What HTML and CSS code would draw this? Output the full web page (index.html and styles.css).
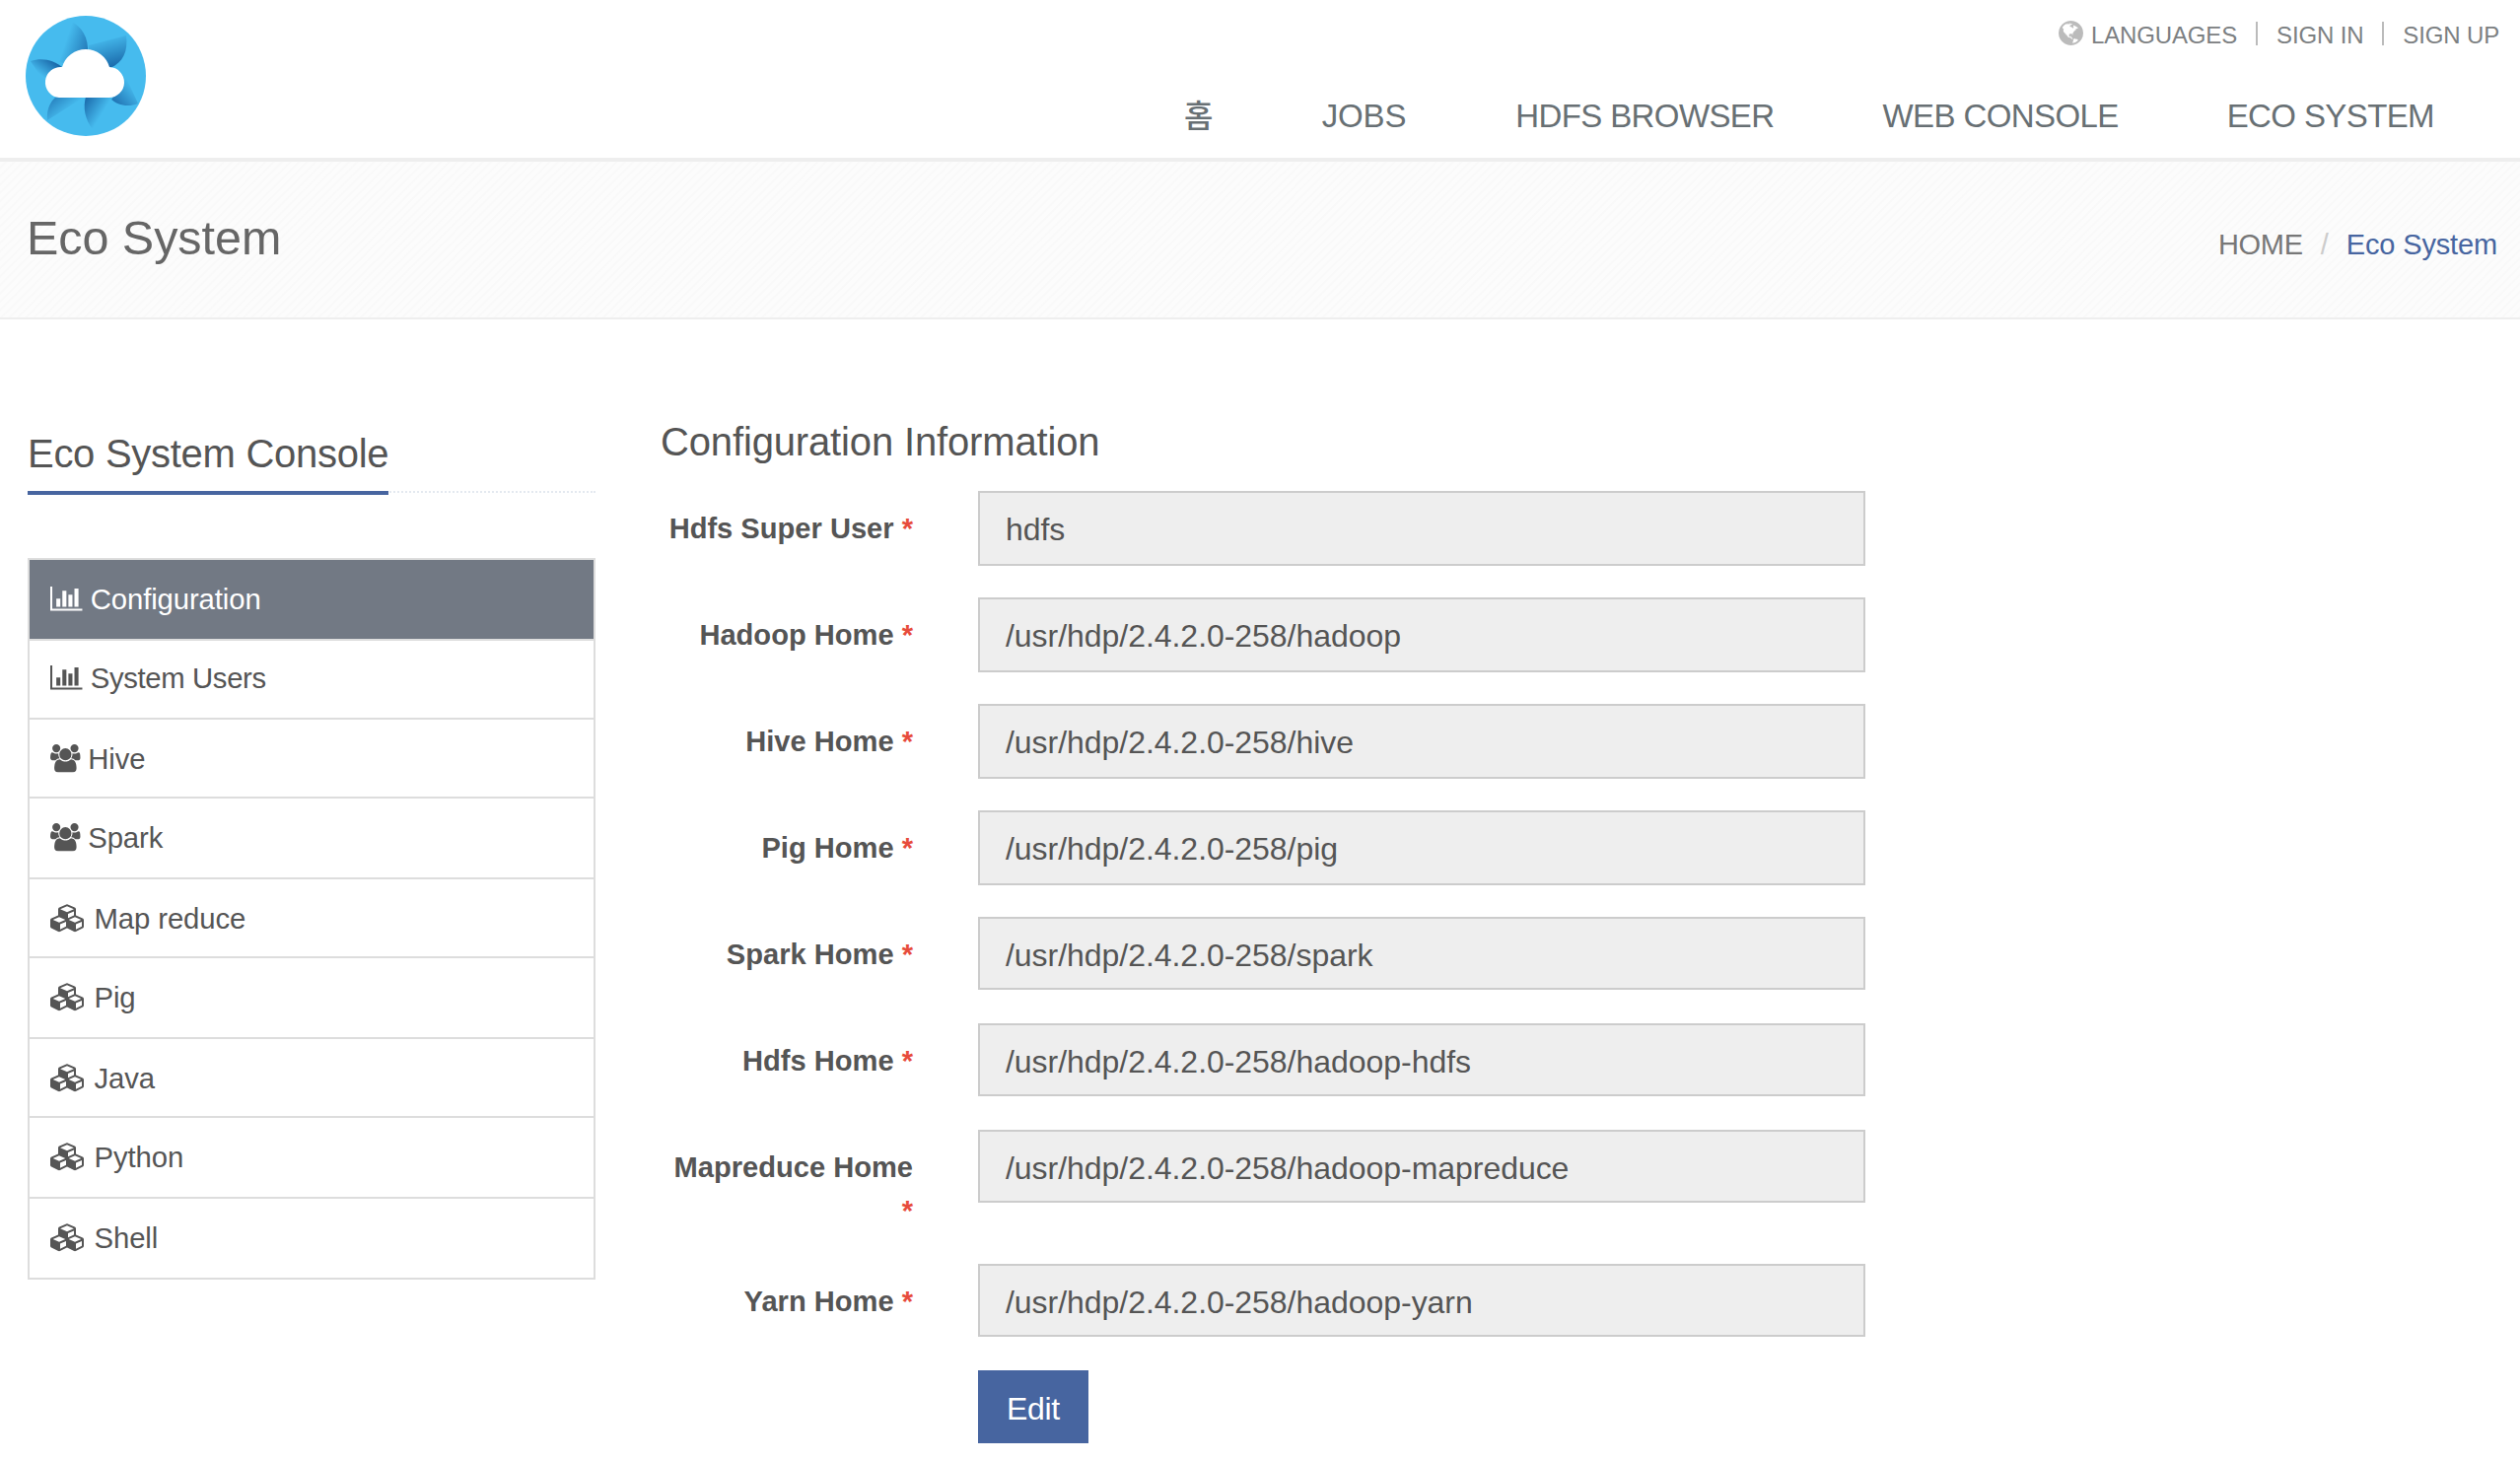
FILE: index.html
```html
<!DOCTYPE html>
<html lang="ko">
<head>
<meta charset="utf-8">
<title>Eco System</title>
<link rel="stylesheet" href="styles.css">
</head>
<body>
<svg class="sprite" aria-hidden="true">
  <symbol id="bar-chart" viewBox="0 0 2048 1792"><path d="M640 896v512h-256v-512h256zm384-512v1024h-256v-1024h256zm1024 1152v128h-2048v-1536h128v1408h1920zm-640-896v768h-256v-768h256zm384-384v1152h-256v-1152h256z"/></symbol>
  <symbol id="group" viewBox="0 0 1920 1792"><path d="M593 896q-162 5-265 128h-134q-82 0-138-40.500t-56-118.500q0-353 124-353 6 0 43.500 21t97.500 42.500 119 21.500q67 0 133-23-5 37-5 66 0 139 81 256zm1071 637q0 120-73 189.500t-194 69.500h-874q-121 0-194-69.500t-73-189.500q0-53 3.500-103.500t14-109 26.500-108.500 43-97.500 62-81 85.500-53.500 111.500-20q10 0 43 21.500t73 48 107 48 135 21.500 135-21.500 107-48 73-48 43-21.500q61 0 111.500 20t85.500 53.500 62 81 43 97.500 26.500 108.500 14 109 3.500 103.500zm-1024-1277q0 106-75 181t-181 75-181-75-75-181 75-181 181-75 181 75 75 181zm704 384q0 159-112.500 271.500t-271.500 112.500-271.500-112.500-112.500-271.500 112.500-271.500 271.500-112.500 271.500 112.500 112.500 271.500zm576 225q0 78-56 118.500t-138 40.500h-134q-103-123-265-128 81-117 81-256 0-29-5-66 66 23 133 23 59 0 119-21.500t97.500-42.500 43.500-21q124 0 124 353zm-128-609q0 106-75 181t-181 75-181-75-75-181 75-181 181-75 181 75 75 181z"/></symbol>
  <symbol id="cubes" viewBox="0 0 2304 1792"><path d="M640 1632l384-192v-314l-384 164v342zm-64-454l404-173-404-173-404 173zm1088 454l384-192v-314l-384 164v342zm-64-454l404-173-404-173-404 173zm-448-293l384-165v-266l-384 164v267zm-64-379l441-189-441-189-441 189zm1088 518v416q0 36-19 67t-52 47l-448 224q-25 14-57 14t-57-14l-448-224q-4-2-7-4-2 2-7 4l-448 224q-25 14-57 14t-57-14l-448-224q-33-16-52-47t-19-67v-416q0-38 21.500-70t56.500-48l434-186v-400q0-38 21.500-70t56.500-48l448-192q23-10 50-10t50 10l448 192q35 16 56.500 48t21.500 70v400l434 186q36 16 57 48t21 70z"/></symbol>
  <symbol id="globe" viewBox="0 128 1536 1536"><path d="M768 128q209 0 385.500 103t279.500 279.500 103 385.500-103 385.500-279.500 279.500-385.500 103-385.500-103-279.500-279.500-103-385.500 103-385.500 279.500-279.500 385.500-103zm274 521q-2 1-9.500 9.500t-13.500 9.500q2 0 4.500-5t5-11 3.500-7q6-7 22-15 14-6 52-12 34-8 51 11-2-2 9.500-13t14.500-12q3-2 15-4.500t15-7.500l2-22q-12 1-17.500-7t-6.500-21q0 2-6 8 0-7-4.500-8t-11.500 1-9 1q-10-3-15-7.500t-8-16.500-4-15q-2-5-9.500-11t-9.500-10q-1-2-2.500-5.500t-3-6.500-4-5.500-5.500-2.500-7 5-7.500 10-4.500 5q-3-2-6-1.500t-4.500 1-4.500 3-5 3.500q-3 2-8.500 3t-8.500 2q15-5-1-11-10-4-16-3 9-4 7.500-12t-8.500-14h5q-1-4-8.500-8.500t-17.500-8.500-13-6q-8-5-34-9.500t-33-.5q-5 6-4.500 10.500t4 14 3.500 12.500q1 6-5.500 13t-6.500 12q0 7 14 15.500t10 21.500q-3 8-16 16t-16 12q-5 8-1.500 18.500t10.500 16.500q2 2 1.500 4t-3.500 4.500-5.500 4-6.500 3.500l-3 2q-11 5-20.500-6t-13.500-26q-7-25-16-30-23-8-29 1-5-13-41-26-25-9-58-4 6-1 0-15-7-15-19-12 3-6 4-17.500t1-13.500q3-13 12-23 1-1 7-8.500t9.500-13.500.5-6q35 4 50-11 5-5 11.500-17t10.500-17q9-6 14-5.500t14.500 5.500 14.500 5q14 1 15.500-11t-7.500-20q12 1 3-17-5-7-8-9-12-4-27 5-8 4 2 8-1-1-9.500 10.500t-16.500 17.500-16-5q-1-1-5.500-13.500t-9.500-13.500q-8 0-16 15 3-8-11-15t-24-8q19-12-8-27-7-4-20.500-5t-19.500 4q-5 7-5.500 11.500t5 8 10.500 5.500 11.500 4 8.500 3q14 10 8 14-2 1-8.500 3.500t-11.500 4.500-6 4q-3 4 0 14t-2 14q-5-5-9-17.500t-7-16.500q7 9-25 6l-10-1q-4 0-16 2t-20.500 1-13.500-8q-4-8 0-20 1-4 4-2-4-3-11-9.500t-10-8.500q-46 15-94 41 6 1 12-1 5-2 13-6.500t10-5.500q34-14 42-7l5-5q14 16 20 25-7-4-30-1-20 6-22 12 7 12 5 18-4-3-11.500-10t-14.500-11-15-5q-16 0-22 1-146 80-235 222 7 7 12 8 4 1 5 9t2.500 11 11.500-3q9 8 3 19 1-1 44 27 19 17 21 21 3 11-10 18-1-2-9-9t-9-4q-3 5 .5 18.500t10.500 12.500q-7 0-9.500 16t-2.500 35.500-1 23.500l2 1q-3 12 5.500 34.500t21.500 19.500q-13 3 20 43 6 8 8 9 3 2 12 7.500t15 10 10 10.500q4 5 10 22.500t14 23.500q-2 6 9.500 20t10.500 23q-1 0-2.500 1t-2.500 1q3 7 15.500 14t15.500 13q1 3 2 10t3 11 8 2q2-20-24-62-15-25-17-29-3-5-5.500-15.500t-4.500-14.500q2 0 6 1.500t8.500 3.500 7.500 4 2 3q-3 7 2 17.500t12 18.500 17 19 12 13q6 6 14 19.500t0 13.500q9 0 20 10t17 20q5 8 8 26t5 24q2 7 8.500 13.500t12.500 9.500l16 8 13 7q5 2 18.500 10.500t21.500 11.500q10 4 16 4t14.500-2.500 13.500-3.500q15-2 29 15t21 21q36 19 55 11-2 1 .5 7.500t8 15.500 9 14.500 5.500 8.500q5 6 18 15t18 15q6-4 7-9-3 8 7 20t18 10q14-3 14-32-31 15-49-18 0-1-2.500-5.500t-4-8.500-2.500-8.500 0-7.500 5-3q9 0 10-3.500t-2-12.500-4-13q-1-8-11-20t-12-15q-5 9-16 8t-16-9q0 1-1.500 5.500t-1.500 6.500q-13 0-15-1 1-3 2.500-17.500t3.500-22.500q1-4 5.500-12t7.500-14.500 4-12.500-4.500-9.500-17.500-2.500q-19 1-26 20-1 3-3 10.500t-5 11.500-9 7q-7 3-24 2t-24-5q-13-8-22.500-29t-9.500-37q0-10 2.500-26.500t3-25-5.500-24.500q3-2 9-9.500t10-10.500q2-1 4.500-1.500t4.500 0 4-1.500 3-6q-1-1-4-3-3-3-4-3 7 3 28.500-1.500t27.500 1.500q15 11 22-2 0-1-2.500-9.500t-.5-13.500q5 27 29 9 3 3 15.500 5t17.500 5q3 2 7 5.500t5.500 4.500 5-.5 8.500-6.500q10 14 12 24 11 40 19 44 7 3 11 2t4.500-9.500 0-14-1.500-12.500l-1-8v-18l-1-8q-15-3-18.500-12t1.500-18.500 15-18.500q1-1 8-3.500t15.500-6.500 12.500-8q21-19 15-35 7 0 11-9-1 0-5-3t-7.500-5-4.500-2q9-5 2-16 5-3 7.500-11t7.500-10q9 12 21 2 8-8 1-16 5-7 20.500-10.500t18.500-9.500q7 2 8-2t1-12 3-12q4-5 15-9t13-5l17-11q3-4 0-4 18 2 31-11 10-11-6-20 3-6-3-9.500t-15-5.500q3-1 11.500-.5t10.500-1.500q15-10-7-16-17-5-43 12zm-163 877q206-36 351-189-3-3-12.500-4.500t-12.500-3.500q-18-7-24-8 1-7-2.500-13t-8-9-12.500-8-11-7q-2-2-7-6t-7-5.500-7.500-4.500-8.500-2-10 1l-3 1q-3 1-5.500 2.500t-5.500 3-4 3 0 2.500q-21-17-36-22-5-1-11-5.500t-10.500-7-10-1.500-11.500 7q-5 5-6 15t-2 13q-7-5 0-17.500t2-18.500q-3-6-10.500-4.500t-12 4.500-11.500 8.500-9 6.500-8.500 5.500-8.500 7.500q-3 4-6 12t-5 11q-2-4-11.500-6.500t-9.500-5.500q2 10 4 35t5 38q7 31-12 48-27 25-29 40-4 22 12 26 0 7-8 20.500t-7 21.500q0 6 2 16z"/></symbol>
</svg>

<header class="header">
  <a class="logo" href="#">
    <svg viewBox="0 0 122 122" width="122" height="122">
      <defs>
        <linearGradient id="g1" gradientUnits="userSpaceOnUse" x1="64" y1="36" x2="40" y2="28"><stop offset="0" stop-color="#2277b6"/><stop offset="1" stop-color="#46bbee"/></linearGradient>
        <linearGradient id="g2" gradientUnits="userSpaceOnUse" x1="92" y1="54" x2="83" y2="21"><stop offset="0" stop-color="#1763a5"/><stop offset="1" stop-color="#46bbee"/></linearGradient>
        <linearGradient id="g3" gradientUnits="userSpaceOnUse" x1="88" y1="84" x2="106" y2="68"><stop offset="0" stop-color="#2277b6"/><stop offset="1" stop-color="#46bbee"/></linearGradient>
        <linearGradient id="g4" gradientUnits="userSpaceOnUse" x1="58" y1="84" x2="79" y2="97"><stop offset="0" stop-color="#1763a5"/><stop offset="1" stop-color="#46bbee"/></linearGradient>
        <linearGradient id="g5" gradientUnits="userSpaceOnUse" x1="28" y1="78" x2="43" y2="96"><stop offset="0" stop-color="#2277b6"/><stop offset="1" stop-color="#46bbee"/></linearGradient>
        <linearGradient id="g6" gradientUnits="userSpaceOnUse" x1="30" y1="46" x2="18" y2="62"><stop offset="0" stop-color="#1763a5"/><stop offset="1" stop-color="#46bbee"/></linearGradient>
      </defs>
      <circle cx="61" cy="61" r="61" fill="#46bbee"/>
      <path d="M45 5C57 11 64 22 63 38L48 50 30 46Z" fill="url(#g1)"/>
      <path d="M64 30L102 20C104 36 99 47 86 53L64 38Z" fill="url(#g2)"/>
      <path d="M5 46C17 42 29 45 38 53L22 72Z" fill="url(#g6)"/>
      <path d="M96 50L114 89C104 93 93 91 86 84L98 74Z" fill="url(#g3)"/>
      <path d="M61 82H89L68 115C60 105 58 93 61 82Z" fill="url(#g4)"/>
      <path d="M31 82H60L22 106C21 95 25 87 31 82Z" fill="url(#g5)"/>
      <path d="M34 83A15.500 15.500 0 0 1 37 52A25 25 0 0 1 85 52A15.500 15.500 0 0 1 84 83Z" fill="#fff"/>
    </svg>
  </a>
  <div class="header-right">
    <ul class="topbar">
      <li class="lang"><svg class="globe"><use href="#globe"/></svg>LANGUAGES</li>
      <li>SIGN IN</li>
      <li>SIGN UP</li>
    </ul>
    <nav class="nav"><a class="ko">홈</a><a class="jobs">JOBS</a><a>HDFS BROWSER</a><a>WEB CONSOLE</a><a>ECO SYSTEM</a></nav>
  </div>
</header>

<section class="breadcrumbs">
  <h1>Eco System</h1>
  <div class="crumbs"><span class="home">HOME</span><span class="slash">/</span><span class="current">Eco System</span></div>
</section>

<main class="content">
  <aside class="sidebar">
    <div class="headline"><h2>Eco System Console</h2></div>
    <ul class="menu">
      <li class="active"><svg class="i-bar"><use href="#bar-chart"/></svg>Configuration</li>
      <li class="users"><svg class="i-bar"><use href="#bar-chart"/></svg>System Users</li>
      <li><svg class="i-group"><use href="#group"/></svg>Hive</li>
      <li><svg class="i-group"><use href="#group"/></svg>Spark</li>
      <li><svg class="i-cubes"><use href="#cubes"/></svg>Map reduce</li>
      <li><svg class="i-cubes"><use href="#cubes"/></svg>Pig</li>
      <li><svg class="i-cubes"><use href="#cubes"/></svg>Java</li>
      <li><svg class="i-cubes"><use href="#cubes"/></svg>Python</li>
      <li><svg class="i-cubes"><use href="#cubes"/></svg>Shell</li>
    </ul>
  </aside>
  <form class="form">
    <h3>Configuration Information</h3>
    <div class="row"><label>Hdfs Super User <b>*</b></label><div class="field">hdfs</div></div>
    <div class="row"><label>Hadoop Home <b>*</b></label><div class="field">/usr/hdp/2.4.2.0-258/hadoop</div></div>
    <div class="row"><label>Hive Home <b>*</b></label><div class="field">/usr/hdp/2.4.2.0-258/hive</div></div>
    <div class="row"><label>Pig Home <b>*</b></label><div class="field">/usr/hdp/2.4.2.0-258/pig</div></div>
    <div class="row"><label>Spark Home <b>*</b></label><div class="field short">/usr/hdp/2.4.2.0-258/spark</div></div>
    <div class="row"><label>Hdfs Home <b>*</b></label><div class="field short">/usr/hdp/2.4.2.0-258/hadoop-hdfs</div></div>
    <div class="row two-line"><label>Mapreduce Home <b>*</b></label><div class="field short">/usr/hdp/2.4.2.0-258/hadoop-mapreduce</div></div>
    <div class="row"><label>Yarn Home <b>*</b></label><div class="field short">/usr/hdp/2.4.2.0-258/hadoop-yarn</div></div>
    <button class="edit" type="button">Edit</button>
  </form>
</main>
</body>
</html>
```
FILE: styles.css
```css
* { box-sizing: border-box; }
body {
  margin: 0;
  height: 1482px;
  overflow: hidden;
  background: #fff;
  color: #555;
  font-family: "Liberation Sans", Arial, "Noto Sans CJK KR", sans-serif;
}
ul { list-style: none; margin: 0; padding: 0; }
h1, h2, h3 { margin: 0; font-weight: 400; }
.sprite { display: none; }

.header {
  display: flex;
  justify-content: space-between;
  height: 164px;
  padding: 16px 20px 0 26px;
  border-bottom: 4px solid #eee;
}
.logo svg { display: block; }
.header-right { display: flex; flex-direction: column; align-items: flex-end; }
.topbar {
  display: flex;
  padding-top: 6px;
  color: #7c8082;
  font-size: 24px;
  line-height: 26px;
  letter-spacing: -0.15px;
}
.topbar li { height: 24px; padding-top: 1px; }
.topbar li + li { margin-left: 19px; padding-left: 19px; border-left: 2px solid #bbb; }
.topbar li:last-child { padding-right: 1px; }
.lang { display: flex; }
.globe { width: 25px; height: 25px; margin: -2px 8px 0 0; fill: #bbb; }
.nav {
  display: flex;
  gap: 110px;
  padding: 52px 67px 0 0;
  color: #687074;
  font-size: 33px;
  line-height: 40px;
  letter-spacing: -0.6px;
}
.ko { margin-right: 1px; font-size: 32px; font-weight: 500; }
.jobs { margin-right: 1px; letter-spacing: -0.2px; }

.breadcrumbs {
  display: flex;
  justify-content: space-between;
  height: 160px;
  padding: 49px 23px 0 27px;
  border-bottom: 2px solid #eee;
  background: repeating-linear-gradient(135deg, #fcfcfc 0 3px, #f9f9f9 4px 5px, #fcfcfc 6px);
}
h1 { color: #666; font-size: 48.5px; line-height: 56px; letter-spacing: -0.05px; }
.crumbs { display: flex; padding-top: 17px; color: #777; font-size: 29px; line-height: 36px; }
.home { letter-spacing: -0.3px; }
.slash { padding: 0 18px; color: #ccc; }
.current { color: #4765a0; letter-spacing: -0.15px; }

.content { display: flex; padding: 0 28px; }
.sidebar { width: 576px; padding-top: 112px; }
.headline {
  display: flex;
  height: 64px;
  margin-bottom: 66px;
  border-bottom: 2px dotted #e4e9f0;
}
.headline h2 {
  height: 66px;
  border-bottom: 4px solid #4765a0;
  font-size: 40px;
  line-height: 48px;
  letter-spacing: -0.28px;
}
.menu { border: 2px solid #ddd; border-top: 0; font-size: 29.3px; letter-spacing: -0.1px; }
.menu li {
  display: flex;
  height: 80px;
  padding: 25px 20px 0 21px;
  border-top: 2px solid #ddd;
  line-height: 30px;
}
.menu li:nth-child(1), .menu li:nth-child(4), .menu li:nth-child(6), .menu li:nth-child(8), .menu li:nth-child(9) { height: 82px; }
.menu li.active { background: #727984; color: #fff; }
.menu li.users { padding-top: 23px; letter-spacing: -0.35px; }
.menu svg { height: 28.6px; fill: currentColor; }
.i-bar { width: 32.7px; margin-right: 8px; }
.i-group { width: 30.7px; margin-right: 7.5px; }
.i-cubes { width: 36px; margin-right: 8.5px; }

.form { margin-left: 66px; padding-top: 100px; }
h3 { height: 74px; font-size: 40px; line-height: 48px; letter-spacing: -0.15px; }
.row { display: flex; height: 108px; }
.two-line { height: 136px; }
label {
  width: 256px;
  margin-right: 66px;
  padding-top: 16px;
  text-align: right;
  font-size: 29.1px;
  font-weight: 700;
  line-height: 44px;
}
label b { color: #e74c3c; }
.field {
  width: 900px;
  height: 76px;
  padding: 19px 26px 0;
  border: 2px solid #ccc;
  background: #eee;
  font-size: 32px;
  line-height: 36px;
  letter-spacing: -0.04px;
}
.field.short { height: 74px; }
.edit {
  display: block;
  width: 112px;
  height: 74px;
  margin-left: 322px;
  padding: 3px 0 0;
  border: 0;
  background: #4765a0;
  color: #fff;
  font: 32px/36px "Liberation Sans", Arial, sans-serif;
  letter-spacing: -0.3px;
}
```
